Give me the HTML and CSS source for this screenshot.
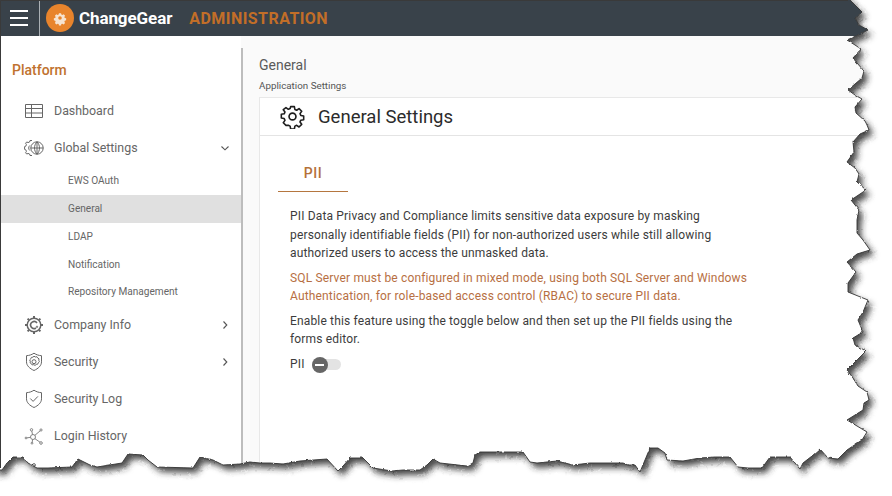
FILE: index.html
```html
<!DOCTYPE html>
<html lang="en">
<head>
<meta charset="utf-8">
<title>ChangeGear Administration</title>
<link rel="stylesheet" href="styles.css">
</head>
<body>
<div class="app">
  <header class="topbar">
    <button class="menu-btn" aria-label="Menu"><span></span><span></span><span></span></button>
    <div class="logo">
      <svg viewBox="0 0 28 28" width="28" height="28"><circle cx="14" cy="14" r="14" fill="#e8842c"/><path transform="translate(3.500 3.500) scale(.75)" fill="#f6e3d0" d="M12.600 7.500h2.800l.4 1.800 1.400.6 1.600-1 2 2-1 1.600.6 1.400 1.800.4v2.800l-1.800.4-.6 1.400 1 1.600-2 2-1.600-1-1.400.6-.4 1.800h-2.800l-.4-1.800-1.400-.6-1.600 1-2-2 1-1.600-.6-1.400-1.800-.4v-2.800l1.800-.4.6-1.400-1-1.600 2-2 1.600 1 1.400-.6zM14 11.600a2.400 2.400 0 1 0 0 4.800 2.400 2.400 0 0 0 0-4.800z"/></svg>
    </div>
    <span class="brand">ChangeGear</span>
    <span class="section-title">ADMINISTRATION</span>
  </header>
  <div class="layout">
    <nav class="sidebar">
      <h2 class="platform">Platform</h2>
      <a class="nav-item">
        <svg class="nav-icon" viewBox="0 0 20 20"><path d="M1.500 3.500h17v13h-17zM1.500 7.500h17M1.500 12h17M7.500 3.500v13"/></svg>
        <span>Dashboard</span>
      </a>
      <a class="nav-item">
        <svg class="nav-icon" viewBox="0 0 20 20"><circle cx="13" cy="10" r="6.200"/><path d="M6.800 10h12.400M13 3.800v12.400M13 3.800c-3.300 3.400-3.300 9 0 12.400M13 3.800c3.300 3.400 3.300 9 0 12.400M8 2.500H6L5.600 4 4 4.600l-1.200-.7-1.200 1.300.8 1.400-.6 1.600-1.200.4v2.800l1.200.4.6 1.600-.8 1.400 1.200 1.300 1.200-.7 1.600.6.4 1.500h2M5.800 7.500a3.400 3.400 0 0 0 0 5"/></svg>
        <span>Global Settings</span>
        <svg class="chev" viewBox="0 0 10 10"><path d="M1.500 3.500 5 6.800l3.500-3.300"/></svg>
      </a>
      <div class="sub-list">
        <a class="sub-item">EWS OAuth</a>
        <a class="sub-item is-active">General</a>
        <a class="sub-item">LDAP</a>
        <a class="sub-item">Notification</a>
        <a class="sub-item">Repository Management</a>
      </div>
      <a class="nav-item">
        <svg class="nav-icon" viewBox="0 0 20 20"><circle cx="10" cy="10" r="6.800" stroke-width="1.500"/><path d="M13 8a3.500 3.500 0 1 0-1 5" stroke-width="1.600"/><circle cx="13" cy="11.800" r=".7"/><path d="M10 1v2M10 17v2M1 10h2M17 10h2M3.600 3.600l1.400 1.400M15 15l1.400 1.400M16.400 3.600 15 5M5 15l-1.400 1.400" stroke-width="2"/></svg>
        <span>Company Info</span>
        <svg class="chev" viewBox="0 0 10 10"><path d="M3.500 1.500 6.800 5 3.500 8.500"/></svg>
      </a>
      <a class="nav-item">
        <svg class="nav-icon" viewBox="0 0 20 20"><path d="M10 1.200c2.400 1.600 4.800 2.300 7.500 2.500v6.100c0 3.900-3.200 6.700-7.500 8.700-4.300-2-7.500-4.800-7.500-8.700V3.700C5.200 3.500 7.600 2.800 10 1.200z"/><path d="M10 4.200l1.300.8 1.500-.3.900 1.300 1.300.8-.2 1.500.6 1.400-1.100 1.100-.6 1.400-1.500.2-1.100 1-1.400-.7-1.600.2-.8-1.300-1.300-.9.300-1.400-.6-1.400 1.100-1.100.6-1.400 1.500-.2z"/><circle cx="10" cy="9.700" r="2"/></svg>
        <span>Security</span>
        <svg class="chev" viewBox="0 0 10 10"><path d="M3.500 1.500 6.800 5 3.500 8.500"/></svg>
      </a>
      <a class="nav-item">
        <svg class="nav-icon" viewBox="0 0 20 20"><path d="M10 1.200c2.400 1.600 4.800 2.300 7.500 2.500v6.100c0 3.900-3.200 6.700-7.500 8.700-4.300-2-7.500-4.800-7.500-8.700V3.700C5.200 3.500 7.600 2.800 10 1.200z"/><path d="M6.300 9.500l2.800 2.900 4.800-5"/></svg>
        <span>Security Log</span>
      </a>
      <a class="nav-item">
        <svg class="nav-icon nav-icon-thin" viewBox="0 0 20 20"><circle cx="9" cy="11" r="2.500"/><circle cx="7.500" cy="3.800" r="1.200"/><circle cx="17" cy="4" r="1.100"/><circle cx="2" cy="12" r=".9"/><circle cx="17" cy="17" r="1.300"/><circle cx="8" cy="17.200" r=".9"/><path d="M7.800 5l.7 3.600M16.200 4.800l-5.400 4.600M2.900 11.900l3.600-.6M16 16.200l-5.200-3.600M8.200 16.300l.4-2.800"/></svg>
        <span>Login History</span>
      </a>
      <a class="nav-item">
        <svg class="nav-icon" viewBox="0 0 20 20"><circle cx="10" cy="2" r="1.400"/></svg>
      </a>
    </nav>
    <main class="main">
      <div class="page-title">General</div>
      <div class="page-sub">Application Settings</div>
      <section class="card">
        <div class="card-head">
          <svg class="gear" viewBox="0 0 24 24"><path d="M10.100 2h3.800l.5 2.900 1.800.8 2.400-1.700 2.700 2.700-1.700 2.400.8 1.800 2.900.5v3.800l-2.900.5-.8 1.800 1.700 2.400-2.700 2.700-2.400-1.700-1.800.8-.5 2.900h-3.800l-.5-2.900-1.800-.8L5.400 21l-2.700-2.700 1.700-2.400-.8-1.800-2.900-.5v-3.800l2.900-.5.8-1.800-1.700-2.400L5.400 3l2.400 1.700 1.800-.8z" transform="translate(.600 .600) scale(.95)"/><circle cx="12" cy="12" r="3.300"/></svg>
          <h1>General Settings</h1>
        </div>
        <div class="card-body">
          <div class="tabs"><div class="tab">PII</div></div>
          <div class="copy">
            <p>PII Data Privacy and Compliance limits sensitive data exposure by masking personally identifiable fields (PII) for non-authorized users while still allowing authorized users to access the unmasked data.</p>
            <p class="warn">SQL Server must be configured in mixed mode, using both SQL Server and Windows Authentication, for role-based access control (RBAC) to secure PII data.</p>
            <p>Enable this feature using the toggle below and then set up the PII fields using the forms editor.</p>
            <div class="toggle-row">
              <span>PII</span>
              <span class="toggle"><span class="knob"></span></span>
            </div>
          </div>
        </div>
      </section>
    </main>
  </div>
  <svg class="torn" viewBox="0 0 892 496" aria-hidden="true">
    <defs>
      <filter id="blur" x="-5%" y="-5%" width="110%" height="110%"><feGaussianBlur stdDeviation="3"/></filter>
      <filter id="rough" filterUnits="userSpaceOnUse" x="-10" y="-10" width="912" height="516">
        <feTurbulence type="fractalNoise" baseFrequency=".22" numOctaves="2" seed="4" result="n"/>
        <feDisplacementMap in="SourceGraphic" in2="n" scale="2.500" xChannelSelector="R" yChannelSelector="G"/>
      </filter>
      <path id="edge" d="M-6 -6H846L850 0 856 6 862 12 855 18 859 25 868 30 858 35 847 40 855 45 861 49 853 58 857 63 864 71 862 78 855 84 848 90 855 95 862 99 855 107 856 113 865 121 867 125 869 130 860 134 853 142 854 152 847 162 855 168 859 174 857 182 866 190 851 200 859 210 857 220 857 233 863 240 870 250 857 254 847 262 856 272 848 283 848 292 858 296 868 300 863 312 858 320 863 332 853 338 855 345 866 351 856 361 847 370 853 378 858 386 867 392 869 400 864 403 863 410 847 420 867 432 862 440 847 450 838 459 828 458 820 449 812 456 803 463 800 469 790 457 770 457 762 468 748 468 738 467 730 457 715 457 700 458 683 461 667 460 665 453 658 448 650 448 645 460 640 472 635 465 628 465 623 463 610 463 590 463 573 465 557 461 537 463 530 462 523 452 480 452 475 455 473 463 467 466 440 463 433 459 427 465 420 470 403 470 392 471 373 468 363 458 350 458 344 465 338 471 327 459 300 461 283 464 270 463 260 463 250 462 240 464 223 465 213 460 200 457 193 468 157 467 148 460 143 455 128 454 122 463 97 467 90 465 78 459 72 467 48 468 37 468 28 463 23 457 13 457 7 463 2 470 -6 470Z"/>
      <clipPath id="outside"><path clip-rule="evenodd" d="M-10 -10H902V506H-10ZM-6 -6H846L850 0 856 6 862 12 855 18 859 25 868 30 858 35 847 40 855 45 861 49 853 58 857 63 864 71 862 78 855 84 848 90 855 95 862 99 855 107 856 113 865 121 867 125 869 130 860 134 853 142 854 152 847 162 855 168 859 174 857 182 866 190 851 200 859 210 857 220 857 233 863 240 870 250 857 254 847 262 856 272 848 283 848 292 858 296 868 300 863 312 858 320 863 332 853 338 855 345 866 351 856 361 847 370 853 378 858 386 867 392 869 400 864 403 863 410 847 420 867 432 862 440 847 450 838 459 828 458 820 449 812 456 803 463 800 469 790 457 770 457 762 468 748 468 738 467 730 457 715 457 700 458 683 461 667 460 665 453 658 448 650 448 645 460 640 472 635 465 628 465 623 463 610 463 590 463 573 465 557 461 537 463 530 462 523 452 480 452 475 455 473 463 467 466 440 463 433 459 427 465 420 470 403 470 392 471 373 468 363 458 350 458 344 465 338 471 327 459 300 461 283 464 270 463 260 463 250 462 240 464 223 465 213 460 200 457 193 468 157 467 148 460 143 455 128 454 122 463 97 467 90 465 78 459 72 467 48 468 37 468 28 463 23 457 13 457 7 463 2 470 -6 470Z"/></clipPath>
    </defs>
    <g filter="url(#rough)">
      <g clip-path="url(#outside)">
        <rect class="torn-paper" x="-10" y="-10" width="912" height="516"/>
        <use href="#edge" class="torn-shadow" filter="url(#blur)" transform="translate(4 5)"/>
      </g>
      <use href="#edge" class="torn-line"/>
    </g>
    <path class="torn-frame" d="M.5 468V.5H848"/>
  </svg>
</div>
</body>
</html>
```
FILE: styles.css
```css
* { box-sizing: border-box; }
html, body { margin: 0; padding: 0; background: #fff; }
body { font-family: Roboto, "Liberation Sans", sans-serif; color: #333; }
h1, h2, p { margin: 0; font-weight: 400; }

.app { position: relative; width: 892px; height: 496px; overflow: hidden; display: flex; flex-direction: column; }

.topbar { flex: none; height: 36px; background: #39424a; display: flex; align-items: center; }
.menu-btn { width: 40px; height: 36px; padding: 0 11px 0 10px; border: 0; border-right: 1px solid #aab0b5; background: none; display: flex; flex-direction: column; justify-content: center; gap: 5px; }
.menu-btn span { display: block; height: 2px; background: #fff; }
.logo { width: 28px; height: 28px; margin-left: 6px; }
.logo svg { display: block; }
.brand { margin-left: 5px; color: #fff; font-size: 17px; font-weight: 700; letter-spacing: -.1px; }
.section-title { margin-left: 17px; color: #c26e28; font-size: 16px; font-weight: 700; letter-spacing: .45px; }

.layout { flex: 1; min-height: 0; display: flex; }

.sidebar { flex: none; width: 241px; background: #fff; color: #666; }
.platform { padding: 26px 0 0 12px; height: 56px; font-size: 14px; font-weight: 500; color: #c0722f; line-height: 17px; }
.nav-item { display: flex; align-items: center; height: 37px; padding-left: 24px; font-size: 12.400px; }
.nav-icon { width: 20px; height: 20px; flex: none; margin-right: 10px; fill: none; stroke: #666; stroke-width: 1; }
.nav-icon-thin { stroke: #777; stroke-width: .9; }
.chev { width: 10px; height: 10px; margin-left: auto; margin-right: 11px; fill: none; stroke: #555; stroke-width: 1.100; }
.sub-list { padding: 1px 0 .5px; }
.sub-item { display: flex; align-items: center; height: 27.750px; padding-left: 68px; font-size: 10.100px; }
.is-active { background: #e0e0e0; }

.main { flex: 1; min-width: 0; position: relative; background: #fafafa; padding: 20px 0 0 18px; }
.main::before { content: ""; position: absolute; left: 0; top: 12px; bottom: 0; width: 2px; background: #bdbdbd; }
.page-title { font-size: 14px; line-height: 18px; color: #5a5a5a; }
.page-sub { margin-top: 6px; font-size: 9.800px; line-height: 12px; color: #555; }
.card { margin-top: 5px; height: 400px; background: #fff; border: 1px solid #e8e8e8; }
.card-head { height: 38px; display: flex; align-items: center; padding-left: 20px; border-bottom: 1px solid #e4e4e4; }
.gear { width: 25px; height: 25px; fill: none; stroke: #1e1e1e; stroke-width: 1.600; stroke-linejoin: round; margin-right: 13px; }
.card-head h1 { font-size: 18.500px; color: #2b2b2b; }
.card-body { padding: 18px 0 0 18px; }
.tabs { display: flex; }
.tab { width: 70px; height: 38px; border-bottom: 1px solid #b5763f; text-align: center; color: #b4713a; font-size: 14px; font-weight: 500; letter-spacing: .5px; line-height: 39px; }
.copy { width: 476px; padding: 15px 0 0 12px; font-size: 12px; line-height: 18.500px; color: #3c3c3c; letter-spacing: .16px; }
.copy p { margin-bottom: 6px; }
.copy .warn { color: #b76f43; }
.toggle-row { display: flex; align-items: center; gap: 7px; margin-top: 6px; font-size: 12px; }
.toggle { position: relative; display: block; width: 29px; height: 11px; border-radius: 6px; background: #e3e3e3; margin-top: 2px; }
.knob { position: absolute; left: 0; top: -2.500px; width: 16px; height: 16px; border-radius: 50%; background: #666; }
.knob::after { content: ""; position: absolute; left: 3.500px; top: 7px; width: 9px; height: 2px; background: #fff; }

.torn { position: absolute; inset: 0; width: 892px; height: 496px; pointer-events: none; }
.torn-paper { fill: #fff; }
.torn-shadow { fill: #2a2a2a; fill-opacity: .85; }
.torn-line { fill: none; stroke: #333; stroke-width: .9; }
.torn-frame { fill: none; stroke: #3a3a3a; stroke-width: 1; }
```
